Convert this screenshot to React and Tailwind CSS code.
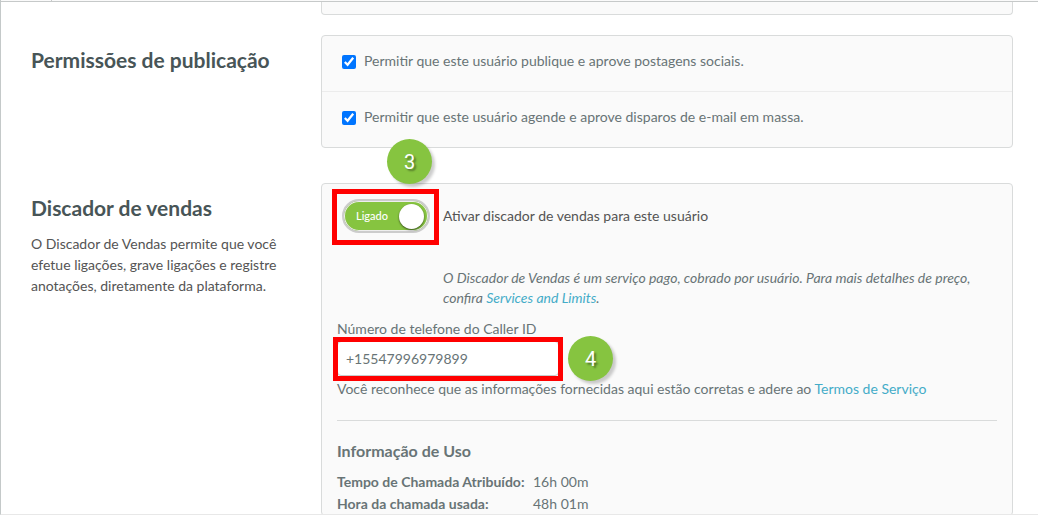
import React, { useState } from 'react';

const permissions = [
  { id: 'social', label: 'Permitir que este usuário publique e aprove postagens sociais.' },
  { id: 'email', label: 'Permitir que este usuário agende e aprove disparos de e-mail em massa.' },
];

const usage = [
  { label: 'Tempo de Chamada Atribuído:', value: '16h 00m' },
  { label: 'Hora da chamada usada:', value: '48h 01m' },
];

const StepBadge = ({ step, className }) => (
  <span
    className={`absolute z-10 flex h-[45px] w-[45px] items-center justify-center rounded-full bg-[#86c440] font-['Roboto',sans-serif] text-xl text-white shadow-[3px_3px_3px_rgba(0,0,0,0.2)] [text-shadow:2px_2px_2px_rgba(0,0,0,0.4)] ${className}`}
  >
    {step}
  </span>
);

const Section = ({ title, description, children }) => (
  <section className="grid grid-cols-[290px_1fr]">
    <div className="pt-[11px] pr-8">
      <h2 className="text-[21px] leading-7 font-bold text-[#485557]">{title}</h2>
      {description && <p className="mt-[11px] leading-[21px] text-[#545454]">{description}</p>}
    </div>
    <div className="rounded border border-[#d9dbdb] bg-[#fafafa]">{children}</div>
  </section>
);

const Toggle = ({ checked, onChange }) => (
  <button
    id="dialer"
    type="button"
    role="switch"
    aria-checked={checked}
    onClick={() => onChange(!checked)}
    className="flex h-[34px] w-[88px] items-center justify-between rounded-full border-2 border-[#cccccc] bg-[#86c440] pr-1 pl-3 text-[11px] font-medium text-white shadow-[inset_0_0_0_1px_#eeeeee]"
  >
    {checked ? 'Ligado' : 'Desligado'}
    <span className="h-[25px] w-[25px] shrink-0 rounded-full bg-white shadow-[0_1px_2px_rgba(0,0,0,0.6)]" />
  </button>
);

const App = () => {
  const [allowed, setAllowed] = useState({ social: true, email: true });
  const [dialer, setDialer] = useState(true);
  const [phone, setPhone] = useState('+15547996979899');

  return (
    <div className="flex h-screen flex-col overflow-hidden border-b border-l border-b-[#e8e8e8] border-l-[#c4c9c9] bg-white font-['Lato',sans-serif] text-sm text-[#687476]">
      <div className="flex h-0.5 shrink-0 border-b border-[#c6c9c9] bg-[#fafafa]">
        <div className="w-[51px] border-r border-[#c6c9c9]" />
      </div>
      <main className="min-h-0 flex-1 overflow-hidden pr-[25px] pl-[30px]">
        <div className="ml-[290px] h-[13px] rounded-b border border-t-0 border-[#d9dbdb] bg-[#fafafa]" />

        <div className="mt-5">
          <Section title="Permissões de publicação">
            <div className="divide-y divide-[#ececec]">
              {permissions.map((item) => (
                <label key={item.id} className="flex h-14 items-center gap-2 pb-1.5 pl-5 last:h-[55px]">
                  <input
                    type="checkbox"
                    checked={allowed[item.id]}
                    onChange={(e) => setAllowed({ ...allowed, [item.id]: e.target.checked })}
                    className="mt-0.5 h-3.5 w-3.5 accent-[#0075ff]"
                  />
                  {item.label}
                </label>
              ))}
            </div>
          </Section>
        </div>

        <div className="mt-[35px]">
          <Section
            title="Discador de vendas"
            description="O Discador de Vendas permite que você efetue ligações, grave ligações e registre anotações, diretamente da plataforma."
          >
            <div className="px-[15px] pt-[15px]">
              <div className="flex items-center pl-[5px]">
                <div className="relative w-[101px]">
                  <Toggle checked={dialer} onChange={setDialer} />
                  <span className="pointer-events-none absolute -top-2.5 -left-2.5 h-14 w-[107px] border-5 border-[#ff0000]" />
                  <StepBadge step="3" className="-top-[60px] left-[45px]" />
                </div>
                <label htmlFor="dialer" className="text-[#545454]">
                  Ativar discador de vendas para este usuário
                </label>
              </div>

              <p className="mt-[35px] ml-[106px] leading-5 italic">
                O Discador de Vendas é um serviço pago, cobrado por usuário. Para mais detalhes de preço,
                confira <a href="#limits" className="text-[#44acc8]">Services and Limits</a>.
              </p>

              <label htmlFor="caller-id" className="mt-[11px] block leading-5">
                Número de telefone do Caller ID
              </label>
              <div className="relative mt-0.5 w-[222px]">
                <input
                  id="caller-id"
                  type="tel"
                  value={phone}
                  onChange={(e) => setPhone(e.target.value)}
                  className="block h-[35px] w-full rounded-sm border border-[#c6cccc] bg-white px-2 outline-none"
                />
                <span className="pointer-events-none absolute -top-1 -left-1 h-11 w-[230px] border-5 border-[#ff0000]" />
                <StepBadge step="4" className="-top-[5px] left-[231px]" />
              </div>
              <p className="mt-[3px] leading-5">
                Você reconhece que as informações fornecidas aqui estão corretas e adere ao{' '}
                <a href="#terms" className="text-[#44acc8]">Termos de Serviço</a>
              </p>

              <hr className="mt-[21px] border-[#d9dbdb]" />

              <h3 className="mt-5 text-base leading-5 font-bold">Informação de Uso</h3>
              <table className="mt-2.5">
                <tbody>
                  {usage.map((row) => (
                    <tr key={row.label} className="h-[22px]">
                      <th scope="row" className="w-[196px] text-left font-bold">{row.label}</th>
                      <td>{row.value}</td>
                    </tr>
                  ))}
                </tbody>
              </table>
            </div>
          </Section>
        </div>
      </main>
    </div>
  );
};

export default App;
